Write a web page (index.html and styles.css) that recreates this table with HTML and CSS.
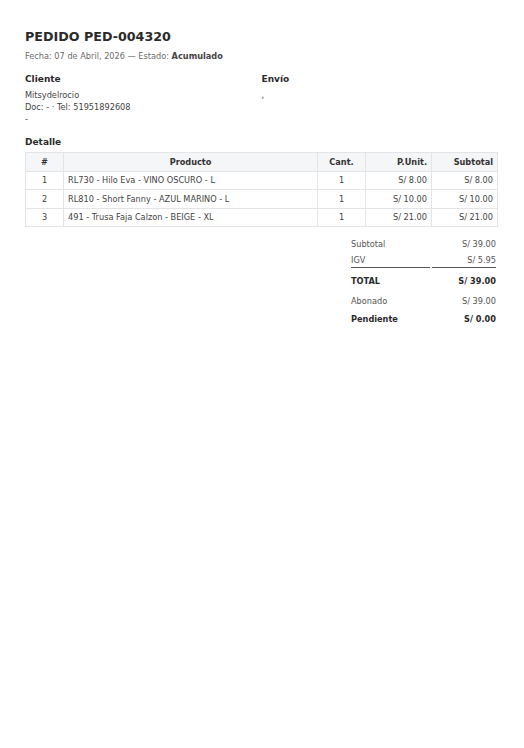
FILE: index.html
```html
<!DOCTYPE html>
<html lang="es">
<head>
<meta charset="utf-8">
<title>Pedido PED-004320</title>
<link rel="stylesheet" href="styles.css">
</head>
<body>
<div class="page">
  <h1 class="title">PEDIDO PED-004320</h1>
  <p class="meta">Fecha: 07 de Abril, 2026 — Estado: <strong>Acumulado</strong></p>

  <div class="parties">
    <div class="party">
      <h2 class="section">Cliente</h2>
      <div class="line">Mitsydelrocio</div>
      <div class="line">Doc: - · Tel: 51951892608</div>
      <div class="line">-</div>
    </div>
    <div class="party">
      <h2 class="section">Envío</h2>
      <div class="line">,</div>
    </div>
  </div>

  <h2 class="section detail-title">Detalle</h2>
  <table class="items">
    <thead>
      <tr>
        <th class="c-num">#</th>
        <th class="c-prod">Producto</th>
        <th class="c-qty">Cant.</th>
        <th class="c-unit">P.Unit.</th>
        <th class="c-sub">Subtotal</th>
      </tr>
    </thead>
    <tbody>
      <tr>
        <td class="c-num">1</td>
        <td class="c-prod">RL730 - Hilo Eva - VINO OSCURO - L</td>
        <td class="c-qty">1</td>
        <td class="c-unit">S/ 8.00</td>
        <td class="c-sub">S/ 8.00</td>
      </tr>
      <tr>
        <td class="c-num">2</td>
        <td class="c-prod">RL810 - Short Fanny - AZUL MARINO - L</td>
        <td class="c-qty">1</td>
        <td class="c-unit">S/ 10.00</td>
        <td class="c-sub">S/ 10.00</td>
      </tr>
      <tr>
        <td class="c-num">3</td>
        <td class="c-prod">491 - Trusa Faja Calzon - BEIGE - XL</td>
        <td class="c-qty">1</td>
        <td class="c-unit">S/ 21.00</td>
        <td class="c-sub">S/ 21.00</td>
      </tr>
    </tbody>
  </table>

  <div class="totals-wrap">
    <table class="totals">
      <tr class="t-row"><td class="t-label">Subtotal</td><td class="t-val">S/ 39.00</td></tr>
      <tr class="t-row t-rule"><td class="t-label">IGV</td><td class="t-val">S/ 5.95</td></tr>
      <tr class="t-total"><td class="t-label">TOTAL</td><td class="t-val">S/ 39.00</td></tr>
      <tr class="t-row"><td class="t-label">Abonado</td><td class="t-val">S/ 39.00</td></tr>
      <tr class="t-pend"><td class="t-label">Pendiente</td><td class="t-val">S/ 0.00</td></tr>
    </table>
  </div>
</div>
</body>
</html>
```

FILE: styles.css
```css
* { box-sizing: border-box; }
html, body { margin: 0; padding: 0; background: #fff; }
body {
  font-family: "DejaVu Sans", sans-serif;
  color: #444;
  font-size: 8.2px;
}
.page {
  padding: 29px 26px 20px 25px;
}
.title {
  margin: 0;
  font-size: 12.7px;
  line-height: 16px;
  font-weight: bold;
  color: #2a2a2a;
}
.meta {
  margin: 6px 0 0;
  font-size: 8.2px;
  line-height: 10px;
  color: #6b6b6b;
}
.meta strong { color: #444; }
.parties {
  display: grid;
  grid-template-columns: 1fr 1fr;
  margin-top: 13px;
}
.section {
  margin: 0;
  font-size: 9px;
  line-height: 11px;
  font-weight: bold;
  color: #2a2a2a;
}
.party .section { margin-bottom: 4px; }
.line {
  line-height: 12px;
  color: #444;
}
.detail-title { margin-top: 12px; margin-bottom: 4px; }
.items {
  width: 100%;
  border-collapse: collapse;
  font-size: 8.2px;
}
.items th, .items td {
  border: 1px solid #e2e4e8;
  padding: 0 4px;
  height: 18.5px;
  color: #444;
}
.items th {
  background: #f5f6f8;
  font-weight: bold;
  color: #333;
}
.c-num { width: 38px; text-align: center; }
.items td.c-prod { text-align: left; }
.c-qty { width: 48px; text-align: center; }
.c-unit { width: 66px; text-align: right; }
.c-sub { width: 66px; text-align: right; }
.items th.c-prod { text-align: center; }
.items th.c-unit, .items th.c-sub { text-align: right; }
.totals-wrap {
  display: flex;
  justify-content: flex-end;
  margin-top: 9px;
}
.totals {
  width: 149px;
  border-collapse: separate;
  border-spacing: 2px 0;
  font-size: 8.2px;
}
.totals td {
  padding: 0;
  color: #555;
}
.t-row td { height: 16px; }
.t-label { text-align: left; }
.totals td.t-val { text-align: right; }
.t-rule td { border-bottom: 1px solid #555; }
.t-total td { height: 25px; font-weight: bold; color: #2a2a2a; }
.t-pend td { height: 20px; font-weight: bold; color: #2a2a2a; }
```
